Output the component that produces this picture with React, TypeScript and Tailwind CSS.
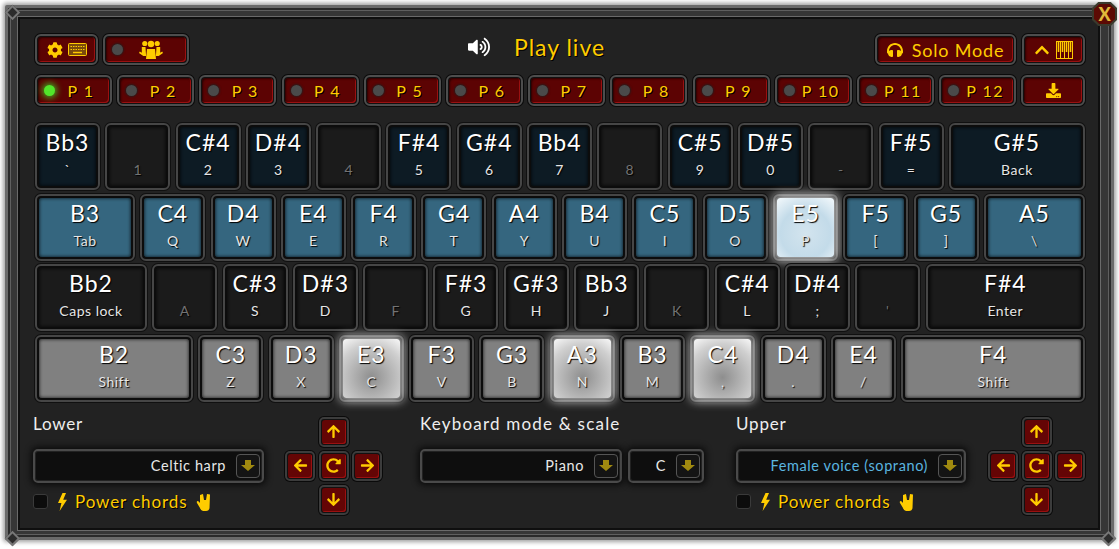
import React from 'react';
import {
  FaArrowDown,
  FaArrowLeft,
  FaArrowRight,
  FaArrowUp,
  FaChevronUp,
  FaCog,
  FaDownload,
  FaHeadphones,
  FaRedoAlt,
  FaVolumeUp,
} from 'react-icons/fa';

const FONT = "font-['Lato','Noto_Sans',sans-serif]";

type Tone = 'dark' | 'blue' | 'black' | 'gray';

const faces: Record<Tone, string> = {
  dark: 'bg-[#0d1b24]',
  blue: 'bg-[#35667f]',
  black: 'bg-[#1b1b1b]',
  gray: 'bg-[#808080]',
};

function KeyboardIcon() {
  return (
    <svg width="19" height="13" viewBox="0 0 19 13" fill="#7a4c0c" stroke="#ffcc00" strokeWidth="1">
      <rect x="0.5" y="0.5" width="18" height="12" rx="1" />
      <path d="M2.500 3.500h14M2.500 6.500h14" strokeDasharray="1.500 1" fill="none" />
      <path d="M5 9.500h9" strokeWidth="1.400" fill="none" />
    </svg>
  );
}

function GroupIcon() {
  return (
    <svg width="24" height="20" viewBox="0 0 24 20" fill="#ffcc00">
      <circle cx="12" cy="4" r="3.200" />
      <circle cx="5.800" cy="3.500" r="2.600" />
      <circle cx="18.200" cy="3.500" r="2.600" />
      <path d="M8 9h8l1 10H7z" />
      <path d="M2.800 7h3.700l.6 9H4.300L0 13l.8-1.400 2 1.200zM21.200 7h-3.700l-.6 9h2.800L24 13l-.8-1.400-2 1.200z" />
    </svg>
  );
}

function PianoIcon() {
  return (
    <svg width="17" height="18" viewBox="0 0 17 18" fill="none" stroke="#ffcc00" strokeWidth="1">
      <rect x="0.500" y="0.500" width="16" height="17" />
      <path d="M4.500 1v16M8.500 1v16M12.500 1v16" />
      <path d="M2.500 1v10M6.500 1v10M10.500 1v10M14.500 1v10" strokeWidth="1.600" />
    </svg>
  );
}

function BoltIcon() {
  return (
    <svg width="10" height="18" viewBox="0 0 10 18" fill="#ffcc00">
      <path d="M5.500 0 1 10h3.400L2.600 18 10 6.800H6.200L9 0z" />
    </svg>
  );
}

function FatArrowDown() {
  return (
    <svg width="14" height="11" viewBox="0 0 14 11" fill="#a08a10">
      <path d="M4 0h6v5h4l-7 6-7-6h4z" />
    </svg>
  );
}

function HornsIcon() {
  return (
    <svg width="16" height="18" viewBox="0 0 16 18" fill="#ffcc00">
      <path d="M4 2 7 1l1 6h2l1-6 3 .5-.5 13.500Q13 18 10 18H7q-2 0-3-3L1 10q-.7-1.500.5-2 1-.2 2.500 2z" />
    </svg>
  );
}

function Led({ on = false }: { on?: boolean }) {
  return on ? (
    <span className="block h-[11px] w-[11px] shrink-0 rounded-full bg-[#52e62a] shadow-[0_0_6px_2px_#3fae20]" />
  ) : (
    <span className="block h-[11px] w-[11px] shrink-0 rounded-full bg-[#4a4a4a] shadow-[0_0_2px_1px_#2a1a1a]" />
  );
}

function RedButton({ className, children }: { className: string; children: React.ReactNode }) {
  return (
    <div
      className={`flex h-[31px] shrink-0 items-center rounded-[6px] border-2 border-[#4d4d4d] bg-[#111] p-px shadow-[0_0_0_1px_#0a0a0a] ${className}`}
    >
      <div className="flex h-full w-full items-center justify-center rounded-[4px] bg-[#5c0303] shadow-[inset_-1px_-1px_0_#9a1010,inset_1px_1px_2px_#2a0000]">
        {children}
      </div>
    </div>
  );
}

function Preset({ n }: { n: number }) {
  return (
    <RedButton className="w-[77px]">
      <span className="flex w-full items-center pl-[6px] pr-[2px]">
        <Led on={n === 1} />
        <span className="flex-1 text-center text-[16px] leading-none tracking-[1.5px] text-[#ffcc00] [text-shadow:1px_1px_0_#000]">
          P {n}
        </span>
      </span>
    </RedButton>
  );
}

function Key({
  note,
  label,
  tone,
  w = 'w-[65px]',
  lit = false,
}: {
  note?: string;
  label: string;
  tone: Tone;
  w?: string;
  lit?: boolean;
}) {
  const dim = !note;
  const face = lit
    ? tone === 'blue'
      ? 'bg-[radial-gradient(circle_at_50%_60%,#d3e4ee,#c3dbe9_55%,#f4f9fc)] shadow-[0_0_10px_4px_#ffffffbb]'
      : 'bg-[radial-gradient(circle_at_50%_65%,#8e8e8e,#cfcfcf_70%,#f8f8f8)] shadow-[0_0_10px_4px_#ffffffaa]'
    : `${faces[tone]} shadow-[inset_0_0_3px_1px_#00000088]`;
  return (
    <div
      className={`h-[67px] ${w} rounded-[6px] border-2 border-[#464646] bg-[#0c0c0c] p-[2px] shadow-[0_0_0_1px_#101010]`}
    >
      <div className={`flex h-full w-full flex-col items-center rounded-[3px] ${face}`}>
        <span className="mt-[1px] h-[28px] text-[23px] leading-[28px] tracking-[1px] text-white [text-shadow:1px_1px_1px_#000]">
          {note}
        </span>
        <span
          className={`mt-[5px] text-[14px] leading-[18px] tracking-[0.5px] [text-shadow:1px_1px_1px_#000] ${
            dim ? 'text-[#737373]' : 'text-[#e6e6e6]'
          }`}
        >
          {label}
        </span>
      </div>
    </div>
  );
}

function Select({ w, text, blue = false }: { w: string; text: string; blue?: boolean }) {
  return (
    <div
      className={`flex h-[34px] ${w} items-center rounded-[5px] border-2 border-[#4a4a4a] bg-[#0e0e0e] pl-2 pr-[2px] shadow-[0_0_6px_2px_#0a0a0a,inset_0_0_0_1px_#222]`}
    >
      <span
        className={`flex-1 truncate pr-[10px] text-right text-[14.5px] tracking-[0.6px] ${
          blue ? 'text-[#5bb6e0]' : 'text-[#e8e8e8]'
        }`}
      >
        {text}
      </span>
      <span className="flex h-[24px] w-[24px] shrink-0 items-center justify-center rounded-[4px] border border-[#555] bg-[#141414]">
        <FatArrowDown />
      </span>
    </div>
  );
}

function Pad({ icon, className = '' }: { icon: React.ReactNode; className?: string }) {
  return (
    <div
      className={`flex h-[30px] w-[30px] items-center justify-center rounded-[5px] border-2 border-[#3c3c3c] bg-[#111] p-px shadow-[0_0_0_1px_#0a0a0a] ${className}`}
    >
      <div className="flex h-full w-full items-center justify-center rounded-[3px] bg-[#640505] text-[15px] text-[#ffcc00] shadow-[inset_-1px_-1px_0_#9a1010]">
        {icon}
      </div>
    </div>
  );
}

function ArrowPad() {
  return (
    <div className="grid w-[97px] shrink-0 grid-cols-[30px_30px_30px] grid-rows-[30px_30px_30px] gap-x-[3.5px] gap-y-[4px] pt-[3px]">
      <Pad icon={<FaArrowUp />} className="col-start-2" />
      <Pad icon={<FaArrowLeft />} className="col-start-1 row-start-2" />
      <Pad icon={<FaRedoAlt />} className="col-start-2 row-start-2" />
      <Pad icon={<FaArrowRight />} className="col-start-3 row-start-2" />
      <Pad icon={<FaArrowDown />} className="col-start-2 row-start-3" />
    </div>
  );
}

function PowerChords() {
  return (
    <div className="mt-[9px] flex items-center">
      <span className="h-[15px] w-[15px] rounded-[3px] border border-[#3a3a3a] bg-[#0c0c0c]" />
      <span className="ml-[9px]">
        <BoltIcon />
      </span>
      <span className="ml-[8px] text-[17px] leading-[20px] tracking-[0.9px] text-[#ffcc00] [text-shadow:1px_1px_0_#000]">
        Power chords
      </span>
      <span className="ml-[9px]">
        <HornsIcon />
      </span>
    </div>
  );
}

function Corner({ className }: { className: string }) {
  return (
    <span
      className={`absolute h-[11px] w-[11px] rotate-45 border-2 border-[#777] bg-[#2c2c2c] ${className}`}
    />
  );
}

const row1: [string | undefined, string][] = [
  ['Bb3', '`'], [undefined, '1'], ['C#4', '2'], ['D#4', '3'], [undefined, '4'], ['F#4', '5'], ['G#4', '6'],
  ['Bb4', '7'], [undefined, '8'], ['C#5', '9'], ['D#5', '0'], [undefined, '-'], ['F#5', '='],
];
const row2: [string, string][] = [
  ['C4', 'Q'], ['D4', 'W'], ['E4', 'E'], ['F4', 'R'], ['G4', 'T'], ['A4', 'Y'], ['B4', 'U'], ['C5', 'I'],
  ['D5', 'O'], ['E5', 'P'], ['F5', '['], ['G5', ']'],
];
const row3: [string | undefined, string][] = [
  [undefined, 'A'], ['C#3', 'S'], ['D#3', 'D'], [undefined, 'F'], ['F#3', 'G'], ['G#3', 'H'], ['Bb3', 'J'],
  [undefined, 'K'], ['C#4', 'L'], ['D#4', ';'], [undefined, "'"],
];
const row4: [string, string][] = [
  ['C3', 'Z'], ['D3', 'X'], ['E3', 'C'], ['F3', 'V'], ['G3', 'B'], ['A3', 'N'], ['B3', 'M'], ['C4', ','],
  ['D4', '.'], ['E4', '/'],
];
const litLower = ['C', 'N', ','];

export default function App() {
  return (
    <div className={`relative h-[549px] w-[1119px] overflow-hidden bg-white ${FONT}`}>
      {/* stone frame */}
      <div className="mx-[5px] mt-[5px] h-[535px] rounded-[2px] border-[3px] border-[#6a6a6a] bg-[#363636] pb-[7px] pl-[10px] pr-[11px] pt-[9px] shadow-[0_0_4px_2px_#a0a0a0,inset_0_0_0_2px_#2a2a2a,inset_0_0_0_3px_#5f5f5f]">
        <div className="h-full w-full border-2 border-[#0f0f0f] bg-[#222222] pl-[15px] pr-[13px] pt-[15px] shadow-[0_0_0_1px_#6a6a6a]">
          {/* top bar */}
          <div className="flex h-[31px] items-center">
            <RedButton className="w-[63px]">
              <span className="flex items-center gap-[5px]">
                <FaCog className="text-[16px] text-[#ffcc00]" />
                <KeyboardIcon />
              </span>
            </RedButton>
            <RedButton className="ml-[5px] w-[86px]">
              <span className="flex w-full items-center pl-[6px]">
                <Led />
                <span className="ml-[16px]">
                  <GroupIcon />
                </span>
              </span>
            </RedButton>
            <div className="flex h-[31px] flex-1 items-center justify-center pb-[6px] pl-[9px]">
              <FaVolumeUp className="text-[22px] text-white" />
              <span className="ml-[24px] text-[23px] leading-[28px] tracking-[1px] text-[#ffcc00] [text-shadow:1px_1px_0_#000]">
                Play live
              </span>
            </div>
            <RedButton className="w-[141px]">
              <span className="flex items-center gap-[9px]">
                <FaHeadphones className="text-[16px] text-[#ffcc00]" />
                <span className="text-[18px] leading-none tracking-[0.8px] text-[#ffcc00]">Solo Mode</span>
              </span>
            </RedButton>
            <RedButton className="ml-[6px] w-[63px]">
              <span className="flex items-center gap-[6px]">
                <FaChevronUp className="text-[16px] text-[#ffcc00]" />
                <PianoIcon />
              </span>
            </RedButton>
          </div>

          {/* presets */}
          <div className="mt-[10px] flex gap-[5.2px]">
            {Array.from({ length: 12 }, (_, i) => (
              <Preset key={i} n={i + 1} />
            ))}
            <RedButton className="flex-1">
              <FaDownload className="text-[15px] text-[#ffcc00]" />
            </RedButton>
          </div>

          {/* keyboard */}
          <div className="mt-[17px] flex flex-col gap-[3.5px]">
            <div className="flex gap-[5.3px]">
              {row1.map(([note, label]) => (
                <Key key={label} note={note} label={label} tone={note ? 'dark' : 'black'} />
              ))}
              <Key note="G#5" label="Back" tone="dark" w="flex-1" />
            </div>
            <div className="flex gap-[5.3px]">
              <Key note="B3" label="Tab" tone="blue" w="w-[100px]" />
              {row2.map(([note, label]) => (
                <Key key={label} note={note} label={label} tone="blue" lit={label === 'P'} />
              ))}
              <Key note="A5" label="\" tone="blue" w="flex-1" />
            </div>
            <div className="flex gap-[5.3px]">
              <Key note="Bb2" label="Caps lock" tone="black" w="w-[112px]" />
              {row3.map(([note, label]) => (
                <Key key={label} note={note} label={label} tone="black" />
              ))}
              <Key note="F#4" label="Enter" tone="black" w="flex-1" />
            </div>
            <div className="flex gap-[5.3px]">
              <Key note="B2" label="Shift" tone="gray" w="w-[158px]" />
              {row4.map(([note, label]) => (
                <Key key={label} note={note} label={label} tone="gray" lit={litLower.includes(label)} />
              ))}
              <Key note="F4" label="Shift" tone="gray" w="flex-1" />
            </div>
          </div>

          {/* instrument selectors */}
          <div className="mt-[12px] flex">
            <div className="-ml-[2px] w-[231px] shrink-0">
              <div className="text-[17px] leading-[20px] tracking-[0.8px] text-[#eeeeee]">Lower</div>
              <div className="mt-[15px]">
                <Select w="w-[231px]" text="Celtic harp" />
              </div>
              <PowerChords />
            </div>
            <div className="ml-[21px]">
              <ArrowPad />
            </div>
            <div className="ml-[38px] w-[284px] shrink-0">
              <div className="text-[17px] leading-[20px] tracking-[1.2px] text-[#eeeeee]">Keyboard mode &amp; scale</div>
              <div className="mt-[15px] flex gap-[6px]">
                <Select w="w-[202px]" text="Piano" />
                <Select w="w-[76px]" text="C" />
              </div>
            </div>
            <div className="ml-[32px] w-[230px] shrink-0">
              <div className="text-[17px] leading-[20px] tracking-[0.8px] text-[#eeeeee]">Upper</div>
              <div className="mt-[15px]">
                <Select w="w-[230px]" text="Female voice (soprano)" blue />
              </div>
              <PowerChords />
            </div>
            <div className="ml-[22px]">
              <ArrowPad />
            </div>
          </div>
        </div>
      </div>

      <Corner className="left-[7px] top-[7px]" />
      <Corner className="bottom-[5px] left-[7px]" />
      <Corner className="bottom-[5px] right-[5px]" />

      {/* close button over the frame corner */}
      <div className="absolute right-[2px] top-[2px] flex h-[24px] w-[25px] items-center justify-center bg-[#3a3a2c] [clip-path:polygon(25%_0,75%_0,100%_25%,100%_75%,75%_100%,25%_100%,0_75%,0_25%)]">
        <div className="flex h-[20px] w-[21px] items-center justify-center bg-[#5c0a03] text-[18px] font-black leading-none text-[#e0b93a] [clip-path:polygon(25%_0,75%_0,100%_25%,100%_75%,75%_100%,25%_100%,0_75%,0_25%)]">
          X
        </div>
      </div>
    </div>
  );
}
